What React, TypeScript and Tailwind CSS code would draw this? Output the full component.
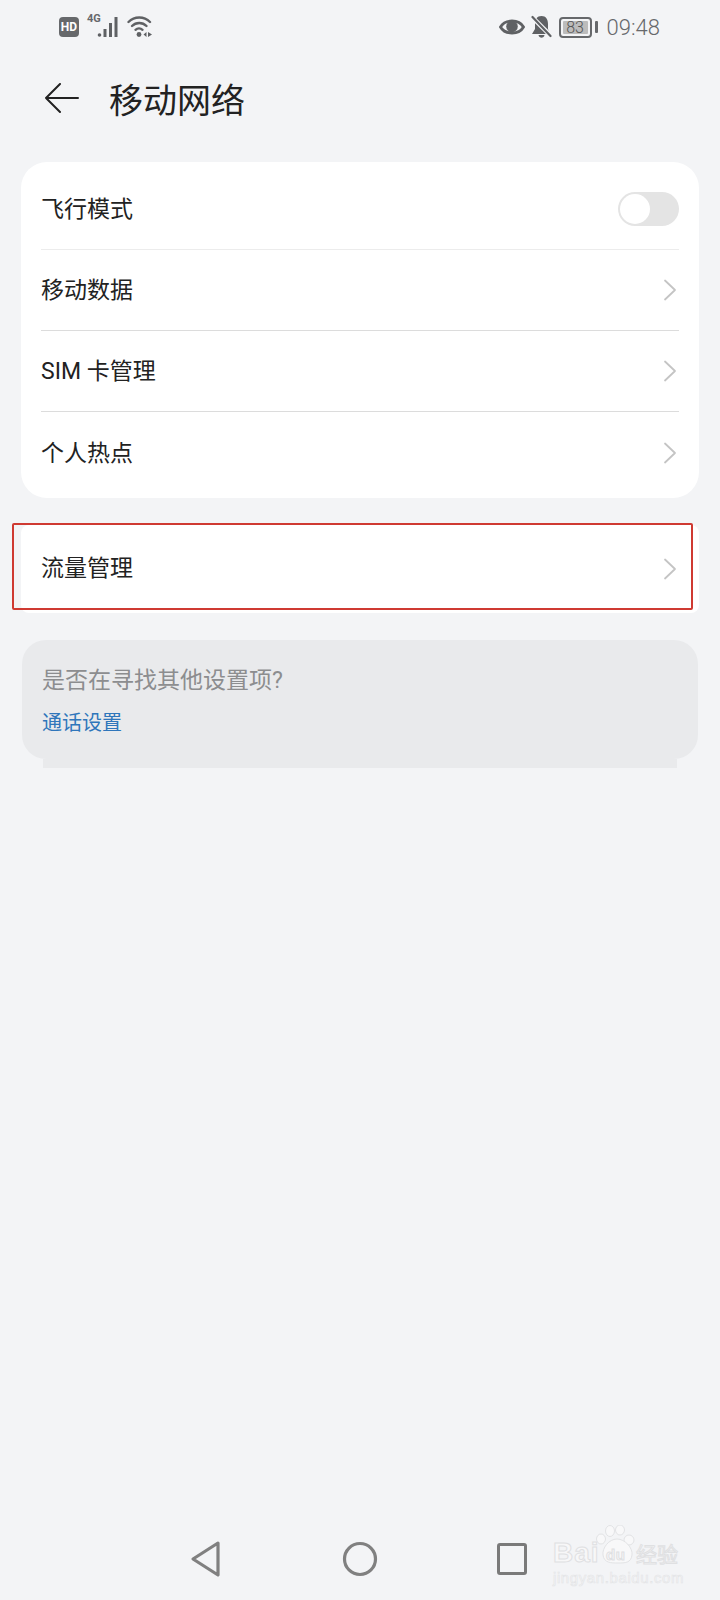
import { ReactNode } from "react";

function Chevron() {
  return (
    <svg width="14" height="24" viewBox="0 0 14 24" fill="none" stroke="#c4c4c4" strokeWidth="1.8" className="mr-[2px]">
      <path d="M2 2.5 L12 12 L2 21.5" strokeLinejoin="round" strokeLinecap="round" />
    </svg>
  );
}

function Row({ label, children, border = "" }: { label: string; children?: ReactNode; border?: string }) {
  return (
    <div className={`h-[81px] flex items-center justify-between ${border}`}>
      <span className="pt-[3px] text-[23px] text-[#222]">{label}</span>
      {children ?? <Chevron />}
    </div>
  );
}

function StatusLeft() {
  return (
    <div className="flex items-center">
      <div className="w-[20px] h-[20px] rounded-[4px] bg-[#66686b] text-white text-[12px] font-bold leading-[20px] text-center font-['Roboto',sans-serif]">
        HD
      </div>
      {/* 4G + signal */}
      <div className="relative w-[32px] h-[24px] ml-[8px]">
        <span className="absolute left-0 top-[-3px] text-[11px] leading-[14px] font-bold text-[#66686b] font-['Roboto',sans-serif]">4G</span>
        <svg width="32" height="24" viewBox="0 0 32 24" fill="#5f6164" className="absolute left-0 top-0">
          <circle cx="12.5" cy="20" r="1.8" />
          <rect x="16.5" y="14" width="3" height="8" />
          <rect x="22" y="8" width="3" height="14" />
          <rect x="27.5" y="2" width="3" height="20" />
        </svg>
      </div>
      {/* wifi */}
      <svg width="26" height="24" viewBox="0 0 26 24" fill="none" stroke="#5f6164" strokeWidth="2.4" strokeLinecap="round" className="ml-[8px]">
        <path d="M1.5 7 C7.5 1 17 1 23 7" />
        <path d="M5 11 C9 7 15.5 7 19.5 11" />
        <path d="M8.5 14.8 C10.5 13 13.5 13 15.5 14.8" />
        <circle cx="12" cy="19.5" r="2.4" fill="#5f6164" stroke="none" />
        <path d="M19.5 17 L19.5 22 L16.5 19.5 Z M21 17 L21 22 L25 19.5 Z" fill="#5f6164" stroke="none" />
      </svg>
    </div>
  );
}

function StatusRight() {
  return (
    <div className="flex items-center">
      {/* eye */}
      <svg width="26" height="20" viewBox="0 0 26 20" className="mr-[6px]">
        <path d="M1.5 10 C6 2 20 2 24.5 10 C20 18 6 18 1.5 10 Z" fill="none" stroke="#5f6164" strokeWidth="2.8" />
        <circle cx="13" cy="9.5" r="5.8" fill="#5f6164" />
      </svg>
      {/* bell off */}
      <svg width="21" height="24" viewBox="0 0 21 24" className="mr-[7px]">
        <path d="M10.5 1 C6 1 4 4.5 4 9 L4 14 L1 19 L19 19 L17 14 L17 9 C17 4.5 15 1 10.5 1 Z" fill="#5f6164" />
        <path d="M7.5 20 C8 23.5 13 23.5 13.5 20 Z" fill="#5f6164" />
        <path d="M0 1 L21 22" stroke="#f3f4f6" strokeWidth="4.5" />
        <path d="M1.5 2 L19.5 21" stroke="#5f6164" strokeWidth="2.2" strokeLinecap="round" />
      </svg>
      {/* battery */}
      <div className="w-[33px] h-[21px] rounded-[4px] border-2 border-[#66686b] p-[2px] flex">
        <div className="w-full h-full rounded-[1px] bg-[#bcbcbc] text-[#555] text-[16px] leading-[13px] text-center font-light font-['Roboto',sans-serif]">
          83
        </div>
      </div>
      <div className="w-[3px] h-[12px] bg-[#66686b] rounded-[1px] ml-[3px]" />
      <span className="ml-[9px] pt-[1px] text-[22px] font-light text-[#66686b] font-['Roboto',sans-serif]">09:48</span>
    </div>
  );
}

function Watermark() {
  return (
    <div className="absolute left-[553px] top-[1525px] w-[130px] h-[62px] font-['Liberation_Sans',sans-serif] text-[#f7f7f8] [-webkit-text-stroke:1px_#dfe0e2]">
      <svg width="86" height="42" viewBox="0 0 86 42" fill="#f8f8f9" stroke="#e2e3e5" strokeWidth="1" className="absolute left-0 top-0">
        <ellipse cx="57" cy="6" rx="4.5" ry="5.5" />
        <ellipse cx="67" cy="5" rx="4.5" ry="5" />
        <ellipse cx="48" cy="14" rx="4.5" ry="5" />
        <ellipse cx="76" cy="15" rx="5" ry="5" />
        <path d="M64 14 C56 14 49 23 50 30 C51 38 58 38 65 38 C72 38 78 38 79 30 C80 23 72 14 64 14 Z" />
      </svg>
      <span className="absolute left-0 top-[12px] text-[28px] font-bold leading-[32px] tracking-[1px]">Bai</span>
      <span className="absolute left-[53px] top-[21px] text-[15px] font-bold leading-[18px] tracking-[0.5px]">du</span>
      <span className="absolute left-[83px] top-[15px] text-[21px] leading-[26px] font-['Noto_Sans_CJK_SC',sans-serif]">经验</span>
      <span className="absolute left-0 top-[44px] text-[15px] leading-[18px] tracking-[0.6px] whitespace-nowrap [-webkit-text-stroke:0.6px_#e3e4e6]">jingyan.baidu.com</span>
    </div>
  );
}

export default function App() {
  return (
    <div className="relative w-[720px] h-[1600px] bg-[#f3f4f6] flex flex-col font-['Roboto','Noto_Sans_CJK_SC',sans-serif]">
      {/* Status bar */}
      <div className="h-[54px] pl-[59px] pr-[60px] flex items-center justify-between">
        <StatusLeft />
        <StatusRight />
      </div>

      {/* Header */}
      <div className="h-[90px] pl-[44px] flex items-center">
        <svg width="36" height="32" viewBox="0 0 36 32" fill="none" stroke="#222" strokeWidth="2" strokeLinecap="round" strokeLinejoin="round">
          <path d="M34 15 L2 15 M16 1 L2 15 L16 29" />
        </svg>
        <h1 className="ml-[29px] pt-[4px] text-[34px] text-[#222] font-normal">移动网络</h1>
      </div>

      {/* Main settings */}
      <div className="mt-[18px] mx-[21px] px-[20px] pt-[6px] pb-[5px] bg-white rounded-[26px]">
        <Row label="飞行模式" border="border-b border-[#ececec] h-[82px]">
          <div className="w-[61px] h-[34px] rounded-full bg-[#e4e4e4] p-[2px] flex">
            <div className="w-[30px] h-[30px] rounded-full bg-white" />
          </div>
        </Row>
        <Row label="移动数据" border="border-b border-[#dcdcdc]" />
        <Row label="SIM 卡管理" border="border-b border-[#dcdcdc]" />
        <Row label="个人热点" />
      </div>

      {/* Data usage */}
      <div className="mt-[27px] mx-[21px] px-[20px] h-[88px] bg-white rounded-[8px] flex items-center justify-between">
        <span className="text-[23px] text-[#222]">流量管理</span>
        <Chevron />
      </div>

      {/* Suggestion */}
      <div className="mt-[27px] mx-[22px] px-[20px] pt-[25px] h-[119px] bg-[#e9eaec] rounded-[24px]">
        <p className="text-[23px] leading-[32px] text-[#8c8d8f]">是否在寻找其他设置项?</p>
        <a href="#" className="block mt-[12px] text-[20px] leading-[28px] text-[#2f76bb]">通话设置</a>
      </div>
      <div className="mx-[43px] h-[9px] bg-[#e9eaec]" />

      {/* Navigation */}
      <div className="mt-auto h-[82px] relative flex items-center">
        <svg width="32" height="38" viewBox="0 0 32 38" fill="none" stroke="#808080" strokeWidth="3.2" strokeLinejoin="round" className="absolute left-[190px]">
          <path d="M28 3 L3 19 L28 35 Z" />
        </svg>
        <svg width="36" height="36" viewBox="0 0 36 36" fill="none" stroke="#808080" strokeWidth="3.2" className="absolute left-[342px]">
          <circle cx="18" cy="18" r="15.5" />
        </svg>
        <div className="absolute left-[497px] w-[30px] h-[32px] border-[3px] border-[#7a7a7a] rounded-[3px]" />
      </div>
      <Watermark />

      {/* Red highlight annotation */}
      <div className="absolute left-[12px] top-[523px] w-[681px] h-[87px] border-2 border-[#cf3a32] rounded-[2px]" />
    </div>
  );
}
